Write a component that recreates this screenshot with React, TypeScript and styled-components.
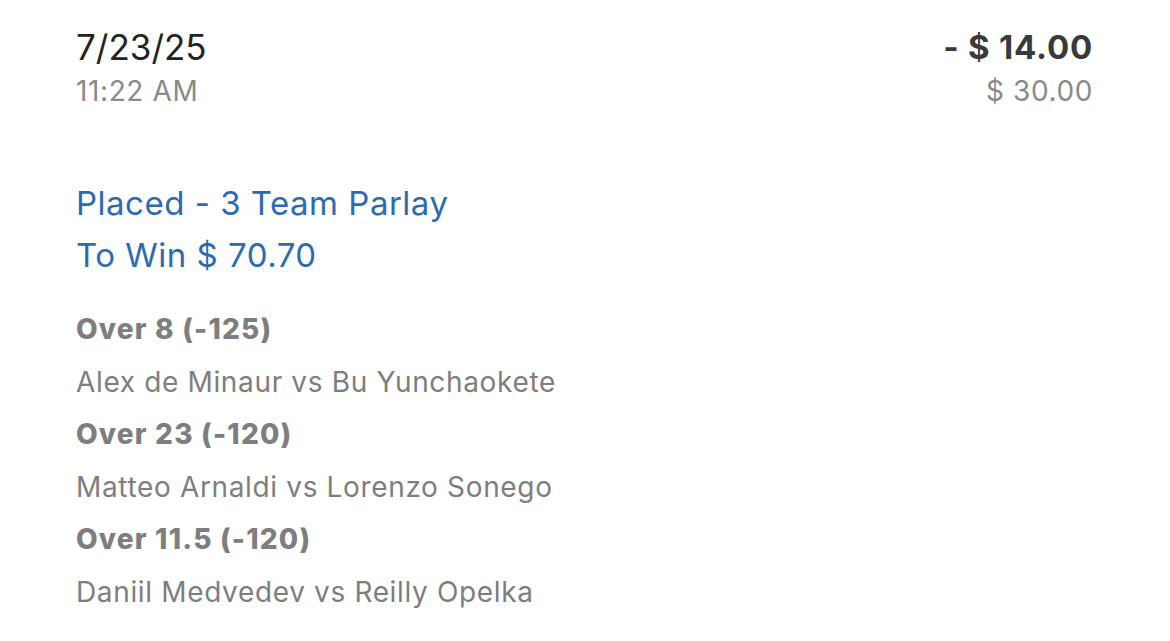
import React from "react";
import styled, { createGlobalStyle } from "styled-components";

const Global = createGlobalStyle`
  html, body { margin: 0; padding: 0; background: #fff; }
  body { font-family: Inter, "Noto Sans", sans-serif; }
`;

const Page = styled.div`
  width: 1170px;
  height: 641px;
  box-sizing: border-box;
  padding: 22px 77px 0 76px;
  display: flex;
  flex-direction: column;
`;

const Header = styled.div`
  display: flex;
  justify-content: space-between;
`;

const Col = styled.div<{ $align?: string }>`
  display: flex;
  flex-direction: column;
  align-items: ${(p) => p.$align || "flex-start"};
`;

const Date = styled.div`
  font-size: 35px;
  line-height: 50px;
  color: #232323;
`;

const Sub = styled.div`
  font-size: 28px;
  line-height: 38px;
  letter-spacing: 0.6px;
  color: #8a8a8a;
`;

const Amount = styled.div`
  font-size: 33px;
  line-height: 50px;
  font-weight: 700;
  letter-spacing: 0.8px;
  color: #3a3a3a;
`;

const Status = styled.div`
  margin-top: 67px;
  display: flex;
  flex-direction: column;
`;

const Blue = styled.div`
  font-size: 33px;
  line-height: 52px;
  letter-spacing: 0.5px;
  color: #2c6bb3;
`;

const Legs = styled.div`
  margin-top: 22px;
  display: flex;
  flex-direction: column;
`;

const Pick = styled.div`
  font-size: 28px;
  line-height: 52.5px;
  font-weight: 800;
  letter-spacing: 1.2px;
  color: #7e7e7e;
`;

const Match = styled.div`
  font-size: 28px;
  line-height: 52.5px;
  letter-spacing: 0.65px;
  color: #7e7e7e;
`;

const legs = [
  { pick: "Over 8 (-125)", match: "Alex de Minaur vs Bu Yunchaokete" },
  { pick: "Over 23 (-120)", match: "Matteo Arnaldi vs Lorenzo Sonego" },
  { pick: "Over 11.5 (-120)", match: "Daniil Medvedev vs Reilly Opelka" },
];

export default function App() {
  return (
    <>
      <Global />
      <Page>
        <Header>
          <Col>
            <Date>7/23/25</Date>
            <Sub>11:22 AM</Sub>
          </Col>
          <Col $align="flex-end">
            <Amount>- $ 14.00</Amount>
            <Sub>$ 30.00</Sub>
          </Col>
        </Header>
        <Status>
          <Blue>Placed - 3 Team Parlay</Blue>
          <Blue>To Win $ 70.70</Blue>
        </Status>
        <Legs>
          {legs.map((l) => (
            <React.Fragment key={l.pick}>
              <Pick>{l.pick}</Pick>
              <Match>{l.match}</Match>
            </React.Fragment>
          ))}
        </Legs>
      </Page>
    </>
  );
}
